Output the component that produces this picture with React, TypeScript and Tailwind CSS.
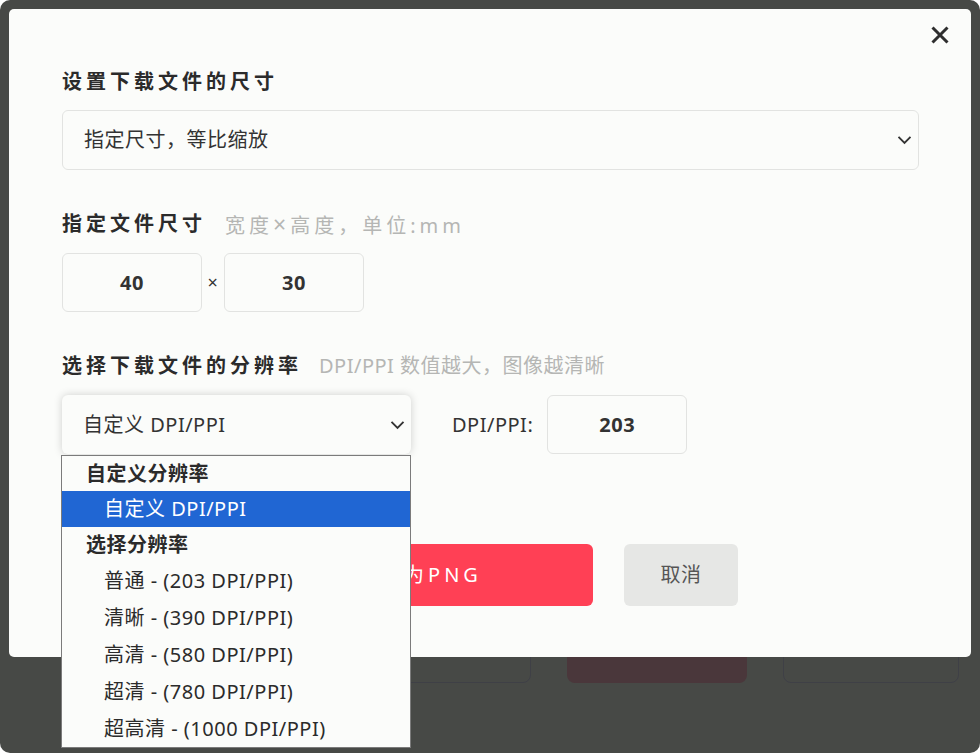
import { useState } from "react";

const presets = [
  "普通 - (203 DPI/PPI)",
  "清晰 - (390 DPI/PPI)",
  "高清 - (580 DPI/PPI)",
  "超清 - (780 DPI/PPI)",
  "超高清 - (1000 DPI/PPI)",
];

function Chevron() {
  return (
    <svg width="15" height="10" viewBox="0 0 15 10" fill="none">
      <path d="M1.5 1.8 7.5 7.8l6-6" stroke="#333" strokeWidth="1.9" />
    </svg>
  );
}

export default function App() {
  const [width] = useState(40);
  const [height] = useState(30);
  const [dpi] = useState(203);

  return (
    <div className="w-[980px] h-[753px] bg-white font-['Noto_Sans','Noto_Sans_CJK_SC',sans-serif] tracking-[0.5px]">
      <div className="relative h-full rounded-[10px] bg-[#474946] overflow-hidden flex flex-col justify-end">
        {/* 页面底部按钮（遮罩后面） */}
        <div className="flex pb-[70px] pl-[350px] gap-[36px]">
          <div className="w-[181px] h-[62px] rounded-[8px] border border-[#3f4046]" />
          <div className="w-[180px] h-[62px] rounded-[8px] bg-[#4a373b]" />
          <div className="w-[176px] h-[62px] rounded-[8px] border border-[#3f4046]" />
        </div>

        {/* 弹窗 */}
        <div className="absolute left-[9px] top-[9px] w-[962px] h-[648px] rounded-[5px] bg-[#fbfcfa] pl-[53px] pr-[52px] pt-[61px] text-[#333]">
          <button className="absolute right-[20px] top-[15px] w-[22px] h-[22px] flex items-center justify-center">
            <svg width="20" height="20" viewBox="0 0 20 20">
              <path d="M2.5 2.5l15 15M17.5 2.5l-15 15" stroke="#2e2e2e" strokeWidth="3" />
            </svg>
          </button>

          <div className="text-[20px] leading-[24px] font-bold tracking-[4px] text-[#2b2b2b]">
            设置下载文件的尺寸
          </div>
          <div className="mt-[16px] h-[60px] rounded-[6px] border border-[#e2e3e1] flex items-center justify-between pl-[21px] pr-[6px]">
            <span className="text-[20px]">指定尺寸，等比缩放</span>
            <Chevron />
          </div>

          <div className="mt-[42px] h-[24px] flex items-center">
            <span className="text-[20px] font-bold tracking-[4px] text-[#2b2b2b]">指定文件尺寸</span>
            <span className="ml-[19px] text-[20px] tracking-[4px] text-[#b5b6b4]">
              宽度<span className="text-[23px]">×</span>高度，单位:mm
            </span>
          </div>
          <div className="mt-[17px] flex items-center">
            <div className="w-[140px] h-[59px] rounded-[6px] border border-[#e2e3e1] flex items-center justify-center text-[20px] font-bold">
              {width}
            </div>
            <span className="w-[22px] text-center text-[18px]">×</span>
            <div className="w-[140px] h-[59px] rounded-[6px] border border-[#e2e3e1] flex items-center justify-center text-[20px] font-bold">
              {height}
            </div>
          </div>

          <div className="mt-[42px] h-[24px] flex items-center">
            <span className="text-[20px] font-bold tracking-[4px] text-[#2b2b2b]">选择下载文件的分辨率</span>
            <span className="ml-[17px] text-[20px] text-[#b5b6b4]">DPI/PPI 数值越大，图像越清晰</span>
          </div>
          <div className="mt-[17px] flex items-center">
            <div className="relative">
              <div className="w-[349px] h-[59px] rounded-[6px] bg-[#fbfcfa] shadow-[0_0_8px_rgba(0,0,0,0.18)] flex items-center justify-between pl-[21px] pr-[6px]">
                <span className="text-[20px]">自定义 DPI/PPI</span>
                <Chevron />
              </div>
              {/* 打开的下拉列表 */}
              <div className="absolute z-10 left-[-1px] top-[60px] w-[350px] border border-[#7b7b7b] bg-[#fbfcfa] text-[20px] text-[#2b2b2b]">
                <div className="h-[35px] flex items-center pl-[24px] font-bold">自定义分辨率</div>
                <div className="h-[36px] flex items-center pl-[42px] bg-[#2066d3] text-white">自定义 DPI/PPI</div>
                <div className="h-[35px] flex items-center pl-[24px] font-bold">选择分辨率</div>
                {presets.map((p) => (
                  <div key={p} className="h-[37px] flex items-center pl-[42px]">
                    {p}
                  </div>
                ))}
              </div>
            </div>
            <span className="ml-[41px] text-[20px]">DPI/PPI:</span>
            <div className="ml-[14px] w-[140px] h-[59px] rounded-[6px] border border-[#e2e3e1] flex items-center justify-center text-[20px] font-bold">
              {dpi}
            </div>
          </div>

          <div className="mt-[90px] flex gap-[31px] pl-[183px]">
            <button className="w-[348px] h-[62px] rounded-[6px] bg-[#ff4055] text-white text-[20px] tracking-[4px]">
              下载为PNG
            </button>
            <button className="w-[114px] h-[62px] rounded-[6px] bg-[#e6e7e5] text-[#555] text-[20px]">
              取消
            </button>
          </div>
        </div>
      </div>
    </div>
  );
}
